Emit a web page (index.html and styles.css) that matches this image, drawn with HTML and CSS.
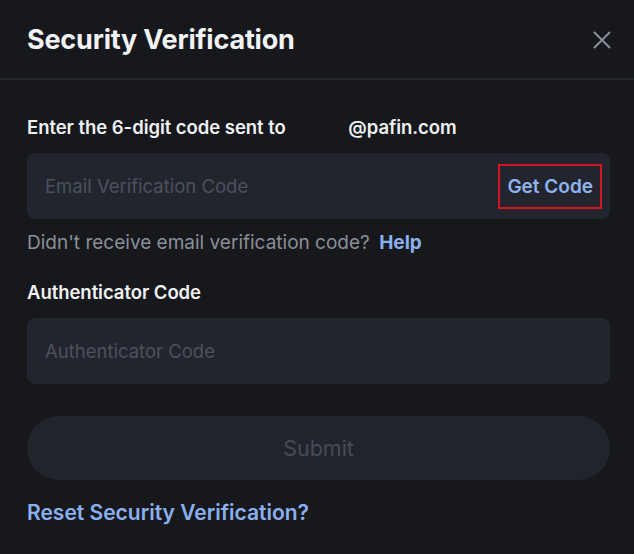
FILE: index.html
```html
<!DOCTYPE html>
<html>
<head>
<meta charset="utf-8">
<link rel="stylesheet" href="styles.css">
</head>
<body>
<div class="modal">
  <div class="header">
    <h1 class="title">Security Verification</h1>
    <svg class="close" width="20" height="20" viewBox="0 0 20 20"><path d="M2 2L18 18M18 2L2 18" stroke="#8a8e99" stroke-width="2" fill="none"/></svg>
  </div>
  <div class="body">
    <div class="label">Enter the 6-digit code sent to <span class="email">@pafin.com</span></div>
    <div class="field">
      <span class="placeholder">Email Verification Code</span>
      <span class="getcode">Get Code</span>
    </div>
    <div class="hint">Didn't receive email verification code? <span class="help">Help</span></div>
    <div class="label label2">Authenticator Code</div>
    <div class="field">
      <span class="placeholder">Authenticator Code</span>
    </div>
    <div class="submit">Submit</div>
    <div class="reset">Reset Security Verification?</div>
  </div>
</div>
</body>
</html>
```
FILE: styles.css
```css
html, body { margin: 0; padding: 0; background: #17181c; }
body { font-family: Inter, Roboto, "Liberation Sans", sans-serif; color: #eaecef; width: 634px; height: 554px; overflow: hidden; }
.modal { width: 634px; }
.header { height: 80px; border-bottom: 2px solid #262830; display: flex; align-items: center; justify-content: space-between; padding: 0 22px 0 27px; box-sizing: border-box; }
.title { margin: 0; font-size: 27px; font-weight: 700; color: #f2f3f5; letter-spacing: -0.2px; position: relative; top: 0; }
.close { position: relative; top: 1px; }
.body { padding: 0 24px 0 27px; display: flex; flex-direction: column; }
.label { font-size: 18.5px; font-weight: 600; color: #f0f1f3; margin-top: 36px; height: 22px; line-height: 22px; letter-spacing: -0.05px; }
.email { margin-left: 58px; }
.label2 { margin-top: 27px; }
.field { margin-top: 15px; height: 66px; background: #22252e; border-radius: 8px; display: flex; align-items: center; justify-content: space-between; padding: 0 8px 0 18px; }
.placeholder { font-size: 18.5px; color: #4d515c; }
.getcode { font-size: 19px; font-weight: 600; color: #8fb3ee; border: 2px solid #d3131d; padding: 9px 7px; height: 23px; line-height: 23px; }
.hint { margin-top: 13px; font-size: 19px; color: #8b8f98; height: 22px; line-height: 22px; }
.help { color: #8ab0ef; font-weight: 700; margin-left: 4px; }
.submit { margin-top: 32px; height: 64px; border-radius: 32px; background: #22242c; display: flex; align-items: center; justify-content: center; font-size: 21.5px; color: #474b55; }
.reset { margin-top: 20px; font-size: 21px; font-weight: 600; color: #8ab0ef; height: 26px; line-height: 26px; }
```
